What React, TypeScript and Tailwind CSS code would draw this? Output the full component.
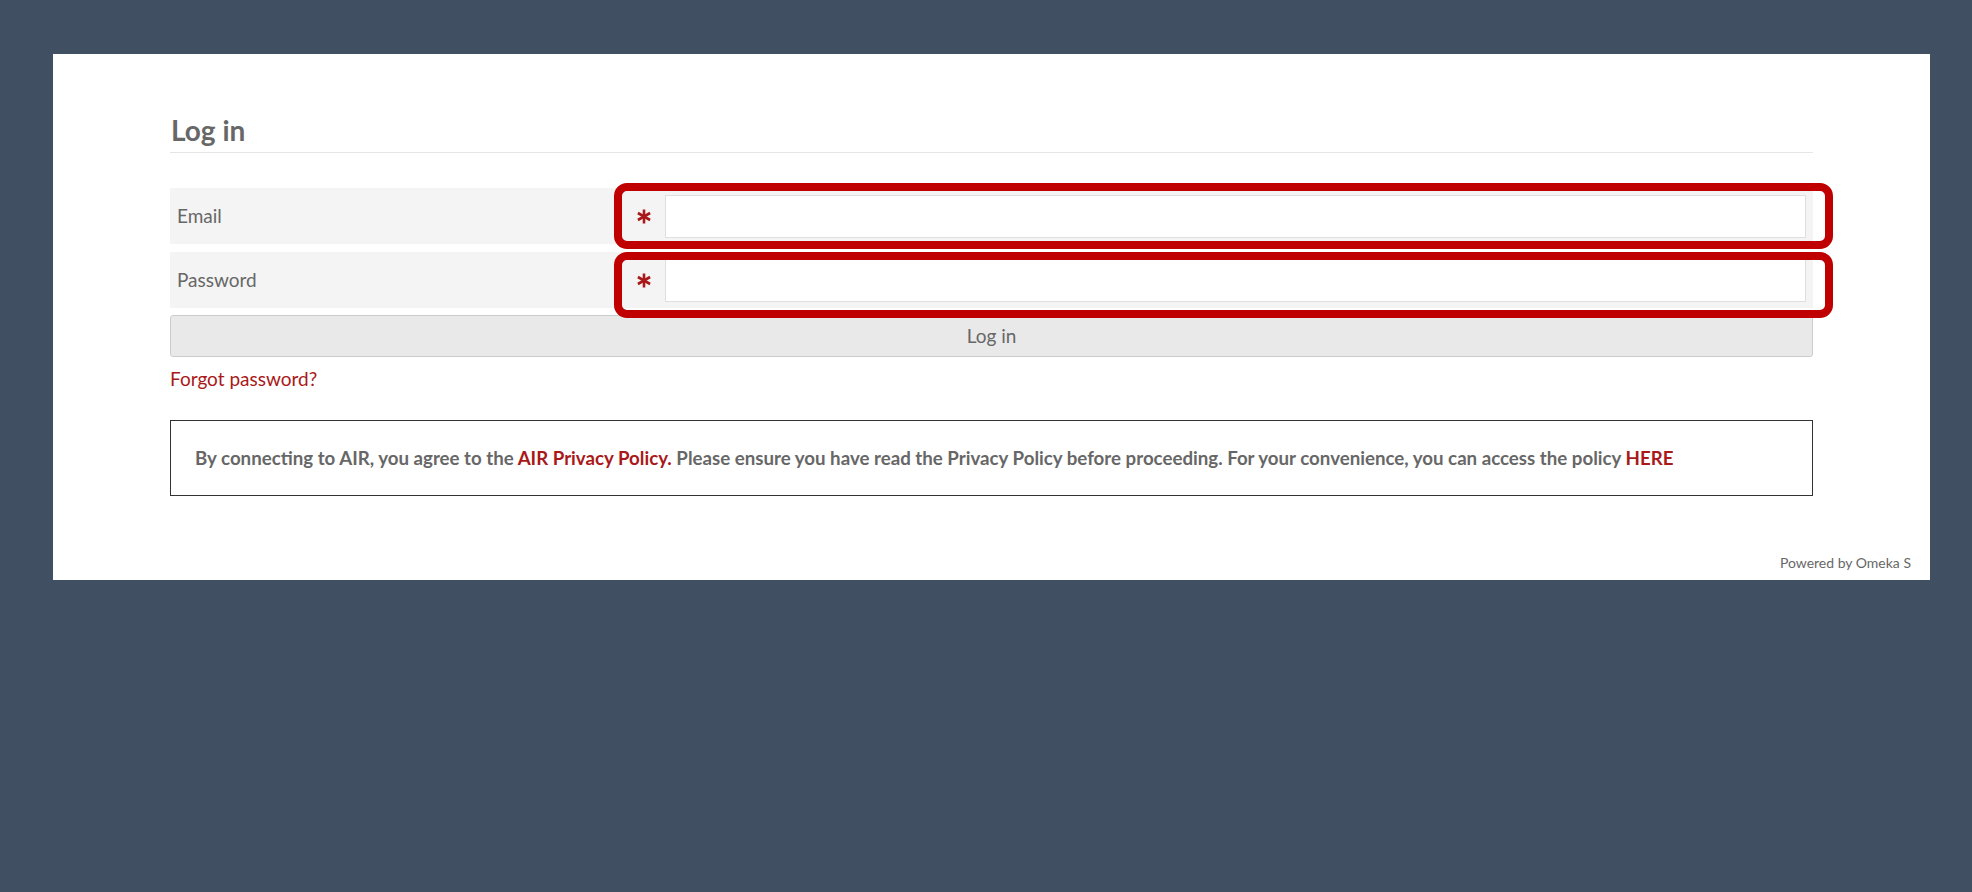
const Asterisk = () => (
  <svg width="14" height="15" viewBox="0 0 14 15" className="shrink-0">
    <g stroke="#a91919" strokeWidth="2.6" strokeLinecap="butt">
      <line x1="7" y1="0.5" x2="7" y2="14.5" />
      <line x1="0.9" y1="4" x2="13.1" y2="11" />
      <line x1="0.9" y1="11" x2="13.1" y2="4" />
    </g>
  </svg>
);

const Field = ({ label, type, boxClass }: { label: string; type: string; boxClass: string }) => (
  <div className="relative flex h-[56px] bg-[#f4f4f4]">
    <label className="flex w-[452px] items-center pl-[7px] text-[19px] text-[#676767]">{label}</label>
    <div className="flex flex-1 items-center pl-[15px] pr-[7px]">
      <Asterisk />
      <input
        type={type}
        className="ml-[14px] h-[43px] flex-1 border border-[#dfdfdf] bg-white px-2 outline-none"
      />
    </div>
    {/* highlight annotation */}
    <div
      className={`pointer-events-none absolute left-[444px] right-[-20px] rounded-[13px] border-[8px] border-[#c00000] ${boxClass}`}
    ></div>
  </div>
);

export default function App() {
  return (
    <div
      className="min-h-screen bg-[#404f62] pt-[54px] pl-[53px]"
      style={{ fontFamily: 'Lato, "Open Sans", sans-serif' }}
    >
      <div className="w-[1877px] bg-white">
        <div className="px-[117px] pt-[59px]">
          <h1 className="border-b border-[#e6e6e6] pb-[5px] pl-px text-[28px] leading-[34px] font-bold text-[#676767]">
            Log in
          </h1>

          <form className="mt-[35px] flex flex-col">
            <div className="flex flex-col gap-[8px]">
              <Field label="Email" type="email" boxClass="top-[-5px] bottom-[-5px]" />
              <Field label="Password" type="password" boxClass="top-0 bottom-[-10px]" />
            </div>
            <button
              type="button"
              className="mt-[7px] h-[42px] rounded-[3px] border border-[#cccccc] bg-[#e9e9e9] text-[19px] text-[#676767]"
            >
              Log in
            </button>
          </form>

          <a href="#" className="mt-[10px] block w-fit text-[19px] leading-[23px] text-[#a91919]">
            Forgot password?
          </a>

          <div className="mt-[30px] border border-[#333333] px-[24px] py-[26px] text-[18.7px] leading-[22px] font-bold text-[#676767]">
            By connecting to AIR, you agree to the{' '}
            <a href="#" className="text-[#a91919]">
              AIR Privacy Policy.
            </a>{' '}
            Please ensure you have read the Privacy Policy before proceeding. For your convenience, you can access the
            policy{' '}
            <a href="#" className="text-[#a91919]">
              HERE
            </a>
          </div>
        </div>

        <div className="mt-[58px] flex justify-end pr-[19px] pb-[9px] text-[14px] leading-[17px] text-[#676767]">
          Powered by Omeka S
        </div>
      </div>
    </div>
  );
}
